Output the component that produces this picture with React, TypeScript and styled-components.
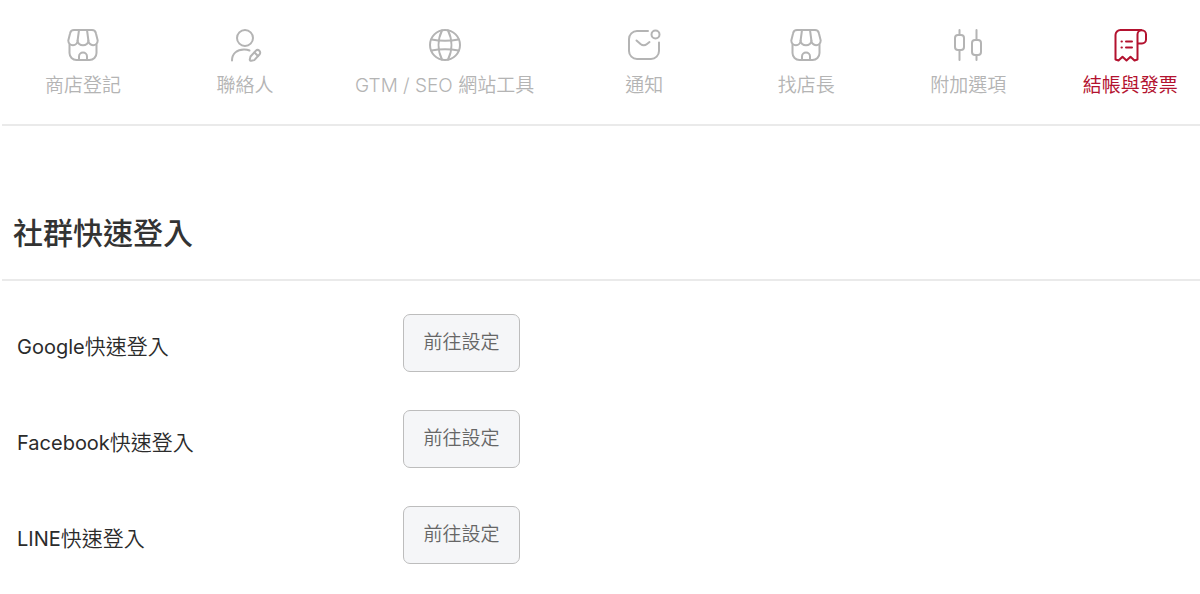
import React from "react";
import styled, { createGlobalStyle } from "styled-components";

const GlobalStyle = createGlobalStyle`
  * {
    box-sizing: border-box;
  }
  body {
    margin: 0;
    background: #ffffff;
    color: #2b2b2b;
    font-family: Inter, "Noto Sans CJK TC", sans-serif;
  }
`;

const Page = styled.div`
  padding-left: 2px;
  overflow-x: hidden;
`;

const TabBar = styled.nav`
  display: flex;
  height: 126px;
  padding-top: 27px;
  border-bottom: 2px solid #eaeaea;
  overflow: hidden;
`;

const Tab = styled.a<{ $active?: boolean }>`
  display: flex;
  flex: none;
  flex-direction: column;
  align-items: center;
  gap: 9px;
  min-width: 162px;
  height: 76px;
  padding: 0 29px;
  color: ${(p) => (p.$active ? "#b3122f" : "#b4b4b4")};
  font-size: 19px;
  font-weight: ${(p) => (p.$active ? 400 : 350)};
  line-height: 28px;
  white-space: nowrap;
  text-decoration: none;
`;

const Icon = styled.svg`
  flex: none;
  width: 36px;
  height: 36px;
  fill: none;
  stroke: currentColor;
  stroke-width: 2;
  stroke-linecap: round;
  stroke-linejoin: round;
`;

const SectionHeader = styled.header`
  padding: 84px 11px 23px;
  border-bottom: 2px solid #eaeaea;
`;

const Title = styled.h1`
  margin: 0;
  color: #333333;
  font-size: 30px;
  font-weight: 500;
  line-height: 46px;
`;

const Rows = styled.div`
  display: grid;
  row-gap: 38px;
  padding: 33px 0 29px 15px;
`;

const Row = styled.div`
  display: grid;
  grid-template-columns: 386px 1fr;
  align-items: start;
`;

const Label = styled.label`
  padding-top: 18px;
  font-size: 20px;
  line-height: 30px;
`;

const LabelAction = styled.span`
  font-size: 21px;
  font-weight: 350;
`;

const SetupButton = styled.button`
  justify-self: start;
  width: 117px;
  height: 58px;
  padding: 0;
  border: 1px solid #bdbdbd;
  border-radius: 7px;
  background: #f5f6f8;
  color: #666666;
  font-family: inherit;
  font-size: 19px;
  font-weight: 350;
  line-height: 28px;
  cursor: pointer;
`;

const StoreIcon = () => (
  <Icon viewBox="0 0 36 36" aria-hidden="true">
    <path d="M9 3h18a4 4 0 0 1 3.900 3.200L32.700 13.500a4.650 4.650 0 0 1-9.300 0 5.400 4.800 0 0 1-10.800 0 4.650 4.650 0 0 1-9.300 0L5.100 6.200A4 4 0 0 1 9 3z" />
    <path d="M14 3l-1.400 10.500M22 3l1.400 10.500" />
    <path d="M4.500 17.500v8.500a7 7 0 0 0 7 7h13a7 7 0 0 0 7-7v-8.500" />
    <path d="M14 33v-3.500a4 4 0 0 1 8 0V33" />
  </Icon>
);

const ContactIcon = () => (
  <Icon viewBox="0 0 36 36" aria-hidden="true">
    <circle cx="18" cy="11" r="8" />
    <path d="M5 33.500c0-7 5-11 12-11 2.500 0 4 .3 5.500 1" />
    <path d="M23.500 29.500l5.200-5.600a2.600 2.600 0 0 1 3.800 3.600l-5.200 5.600-3 .7c-1 .2-1.700-.5-1.500-1.400z" />
    <path d="M27.500 25.500l3.500 3.500" />
  </Icon>
);

const GlobeIcon = () => (
  <Icon viewBox="0 0 36 36" aria-hidden="true">
    <circle cx="18" cy="18" r="15" />
    <path d="M15 3.500c-4.500 9-4.500 20 0 29M21 3.500c4.500 9 4.500 20 0 29" />
    <path d="M4.500 12.500c8.500 1.600 18.500 1.600 27 0M4.500 23.500c8.500-1.600 18.500-1.600 27 0" />
  </Icon>
);

const NoticeIcon = () => (
  <Icon viewBox="0 0 36 36" aria-hidden="true">
    <path d="M22 4H11a8 8 0 0 0-8 8v12a8 8 0 0 0 8 8h14a8 8 0 0 0 8-8V15.500" />
    <circle cx="29.500" cy="7.500" r="4" />
    <path d="M10.500 13.500l4 3.500c2 1.600 4.500 1.600 6.500 0l2.500-2" />
  </Icon>
);

const OptionsIcon = () => (
  <Icon viewBox="0 0 36 36" aria-hidden="true">
    <rect x="5" y="8" width="9" height="15" rx="3" />
    <path d="M9.500 3v5M9.500 23v10" />
    <rect x="22" y="13" width="9" height="15" rx="3" />
    <path d="M26.500 3v10M26.500 28v5" />
  </Icon>
);

const InvoiceIcon = () => (
  <Icon viewBox="0 0 36 36" aria-hidden="true">
    <path d="M29.500 3H8.500a5 5 0 0 0-5 5v24.500l3 1 4-3.800 4 3.800 4-3.800 4 3.800 3-1V7.500a4.250 4.250 0 0 1 8.500 0v5a4 4 0 0 1-4 4H25.500" />
    <path d="M9.500 14.500h.4M9.500 20.500h.4M14 14.500h6M14 20.500h6" />
  </Icon>
);

const tabs = [
  { label: "商店登記", icon: StoreIcon },
  { label: "聯絡人", icon: ContactIcon },
  { label: "GTM / SEO 網站工具", icon: GlobeIcon },
  { label: "通知", icon: NoticeIcon },
  { label: "找店長", icon: StoreIcon },
  { label: "附加選項", icon: OptionsIcon },
  { label: "結帳與發票", icon: InvoiceIcon, active: true },
];

const providers = ["Google", "Facebook", "LINE"];

export default function App() {
  return (
    <>
      <GlobalStyle />
      <Page>
        <TabBar>
          {tabs.map(({ label, icon: TabIcon, active }) => (
            <Tab
              key={label}
              href="#"
              $active={active}
              aria-current={active ? "page" : undefined}
            >
              <TabIcon />
              {label}
            </Tab>
          ))}
        </TabBar>
        <main>
          <SectionHeader>
            <Title>社群快速登入</Title>
          </SectionHeader>
          <Rows>
            {providers.map((name) => (
              <Row key={name}>
                <Label htmlFor={`setup-${name}`}>
                  {name}
                  <LabelAction>快速登入</LabelAction>
                </Label>
                <SetupButton id={`setup-${name}`} type="button">
                  前往設定
                </SetupButton>
              </Row>
            ))}
          </Rows>
        </main>
      </Page>
    </>
  );
}
